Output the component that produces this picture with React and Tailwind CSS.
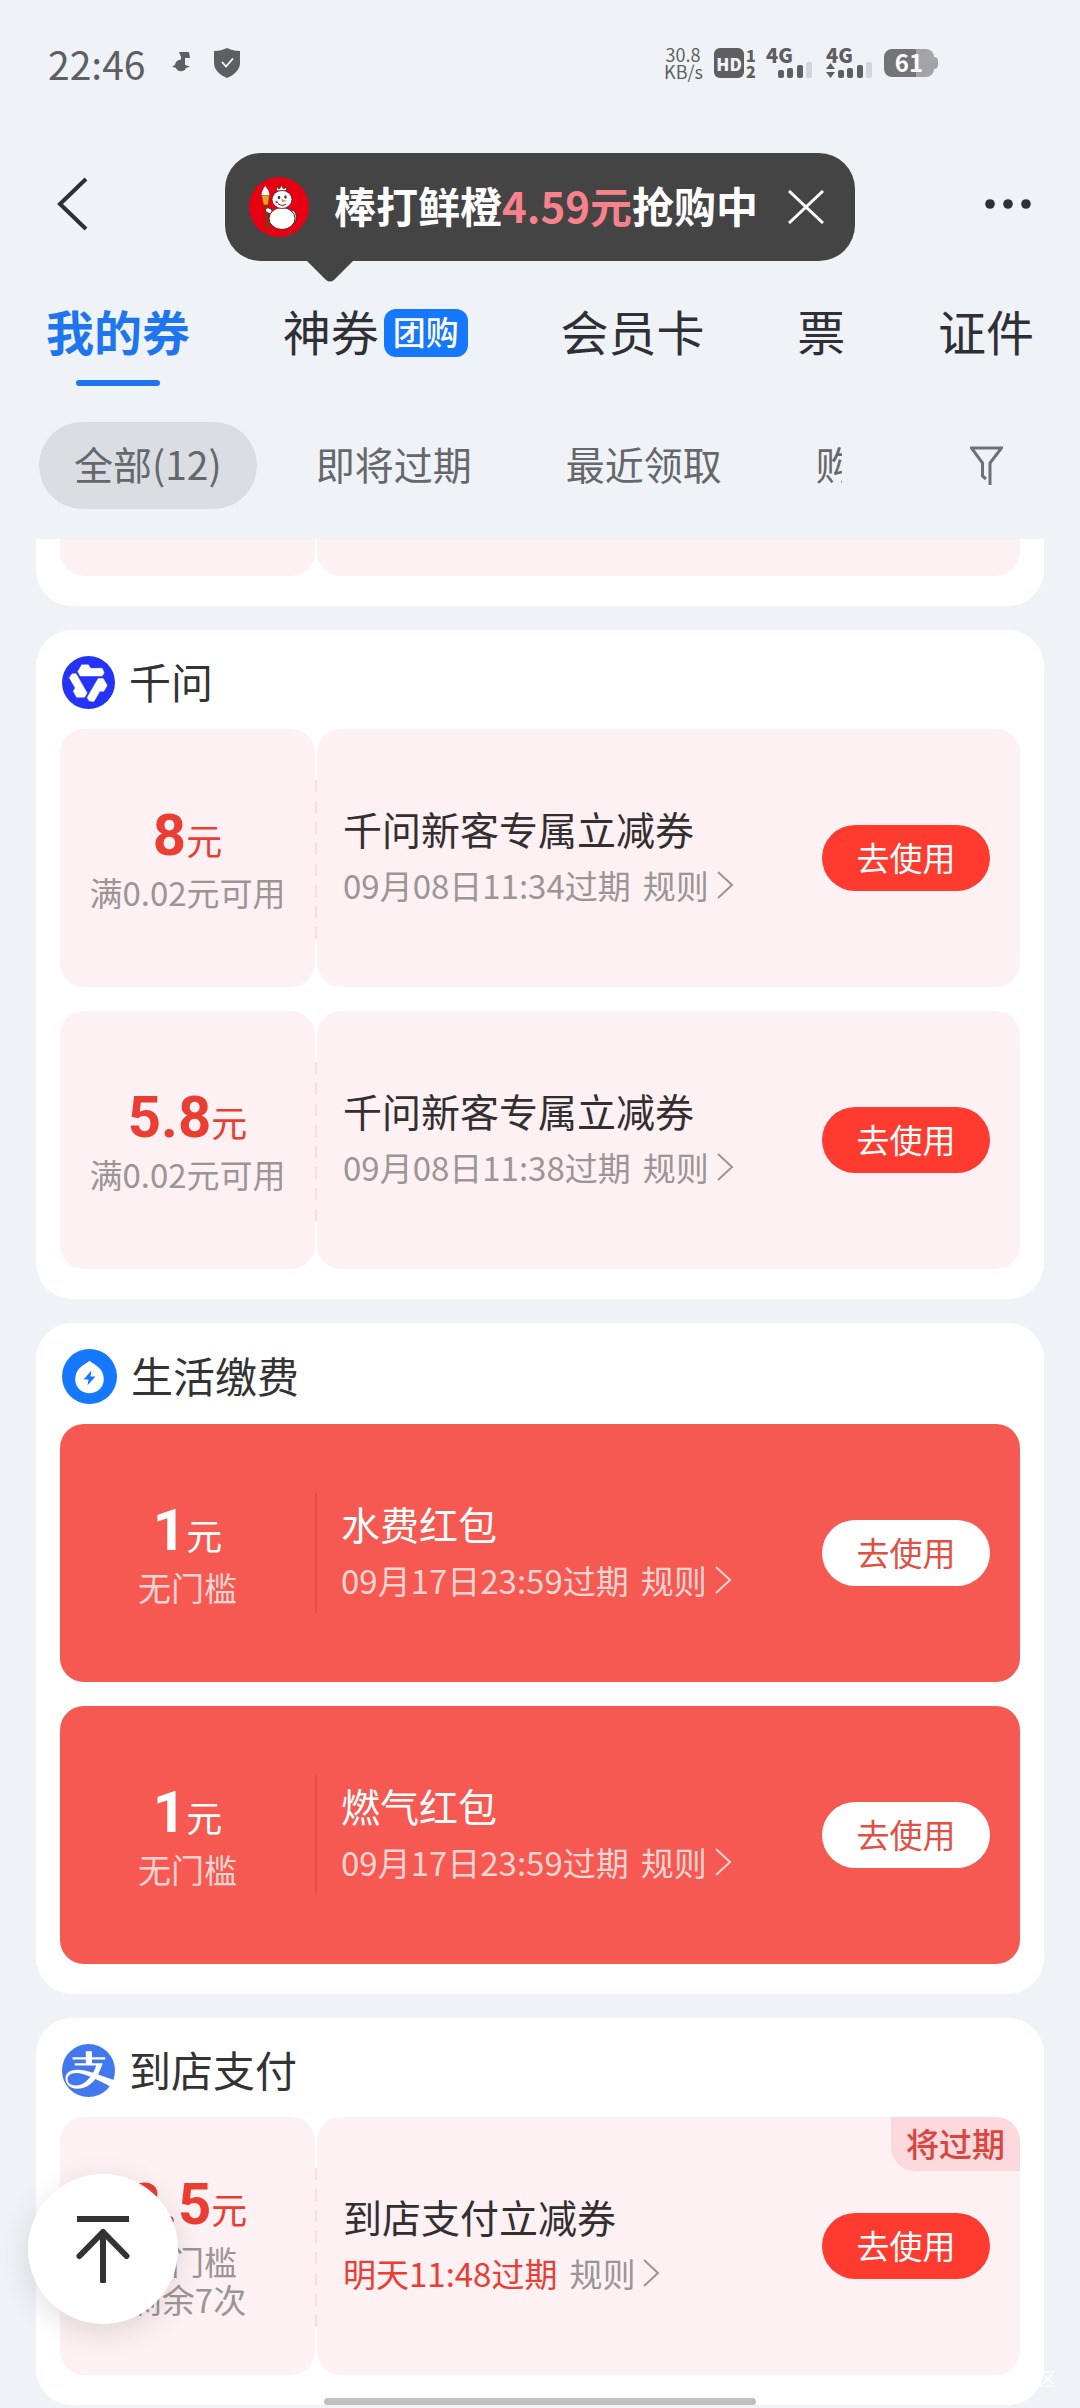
import React, { useState } from 'react';
import { clsx } from 'clsx';
import { FaAlipay } from 'react-icons/fa';

const TABS = [
  { id: 'mine', label: '我的券' },
  { id: 'deals', label: '神券', badge: '团购' },
  { id: 'member', label: '会员卡' },
  { id: 'ticket', label: '票' },
  { id: 'id', label: '证件' },
];

const FILTERS = ['全部(12)', '即将过期', '最近领取', '购物'];

const SECTIONS = [
  {
    id: 'qianwen',
    title: '千问',
    icon: <QianwenLogo />,
    coupons: [
      { amount: '8', notes: ['满0.02元可用'], name: '千问新客专属立减券', expire: '09月08日11:34过期' },
      { amount: '5.8', notes: ['满0.02元可用'], name: '千问新客专属立减券', expire: '09月08日11:38过期' },
    ],
  },
  {
    id: 'life',
    title: '生活缴费',
    icon: <LifeLogo />,
    coupons: [
      { amount: '1', notes: ['无门槛'], name: '水费红包', expire: '09月17日23:59过期', solid: true },
      { amount: '1', notes: ['无门槛'], name: '燃气红包', expire: '09月17日23:59过期', solid: true },
    ],
  },
  {
    id: 'store',
    title: '到店支付',
    icon: <PayLogo />,
    coupons: [
      { amount: '2.5', notes: ['无门槛', '剩余7次'], name: '到店支付立减券', expire: '明天11:48过期', urgent: true },
    ],
  },
];

function QianwenLogo() {
  const blade = 'M16 16L20 9H27L29 12.5H41L43 17L41 20.5H18.5Z';
  return (
    <svg viewBox="0 0 54 54" className="h-[53px] w-[53px]" aria-hidden="true">
      <circle cx="27" cy="27" r="27" fill="#2433f5" />
      <g fill="#fff" stroke="#fff" strokeWidth=".4" strokeLinejoin="round">
        <path d={blade} />
        <path d={blade} transform="rotate(120 27 27)" />
        <path d={blade} transform="rotate(240 27 27)" />
      </g>
    </svg>
  );
}

function LifeLogo() {
  return (
    <svg viewBox="0 0 56 56" className="h-[55px] w-[55px]" aria-hidden="true">
      <circle cx="28" cy="28" r="28" fill="#1677ff" />
      <path d="M28 12C31 15 37 17 40 22C46 32 41 45 28 45C15 45 10 32 16 22C19 17 25 15 28 12Z" fill="#fff" />
      <path d="M30 22L22 31H27L26 37L34 28H29Z" fill="#1677ff" />
    </svg>
  );
}

function PayLogo() {
  return (
    <span className="flex h-[53px] w-[53px] items-center justify-center overflow-hidden rounded-full bg-white">
      <FaAlipay className="h-[62px] w-[62px] shrink-0 text-[#4377ee]" aria-hidden="true" />
    </span>
  );
}

function SnowKing() {
  return (
    <svg viewBox="0 0 60 60" className="h-[60px] w-[60px] shrink-0" aria-hidden="true">
      <circle cx="30" cy="30" r="30" fill="#e60012" />
      <path d="M17 26L18.500 51" stroke="#7a3b12" strokeWidth="3" strokeLinecap="round" />
      <path d="M12.500 18H20.500L19 28H14.500Z" fill="#f0a028" stroke="#7a3b12" strokeWidth=".6" />
      <path d="M16 9C18 11 20.500 14 20.500 18H12.500C12.500 14 14.500 12 16 9Z" fill="#fff" />
      <path d="M28 14L27 9.500L30.500 12L32.500 8L34.500 12L38 9.500L37 14Z" fill="#fff" stroke="#5a1a1a" strokeWidth=".8" />
      <path d="M23 33C19 29 15 31 17 35L23 38ZM43 33C48 34 48 42 46 46L42 42Z" fill="#fff" stroke="#5a1a1a" strokeWidth="1" />
      <ellipse cx="33" cy="41.500" rx="13" ry="11" fill="#fff" stroke="#5a1a1a" strokeWidth="1" />
      <ellipse cx="33" cy="22.500" rx="10" ry="9" fill="#fff" stroke="#5a1a1a" strokeWidth=".8" />
      <ellipse cx="30" cy="20.500" rx="1.300" ry="1.800" fill="#1c3f8f" />
      <ellipse cx="36.500" cy="20" rx="1.300" ry="1.800" fill="#1c3f8f" />
      <path d="M32.500 22L38 24L33 25Z" fill="#f08a1c" />
      <path d="M28 25C30 29 35 29 37 27" fill="none" stroke="#5a1a1a" strokeWidth="1" />
      <circle cx="27.500" cy="25" r="1.200" fill="#e8304a" />
    </svg>
  );
}

function Signal({ active }) {
  return (
    <div className="flex h-[30px] w-[46px] flex-col justify-between">
      <span className="text-[20px] leading-[14px] font-black">4G</span>
      <svg viewBox="0 0 46 16" className="h-4 w-[46px]" fill="#5e5f63" aria-hidden="true">
        {active && <path d="M0 7L4.500 1L9 7ZM0 10H9L4.500 16Z" />}
        <rect x="12" y="8" width="6" height="8" rx="2" />
        <rect x="21" y="6" width="6" height="10" rx="2" />
        <rect x="31" y="3" width="6" height="13" rx="2" />
        <rect x="40" y="0" width="6" height="16" rx="2" fill="#d3d5da" />
      </svg>
    </div>
  );
}

function StatusBar() {
  return (
    <div className="flex items-center justify-between pt-12 pr-[142px] pl-12 text-[#5e5f63]">
      <div className="flex h-[30px] items-center">
        <span className="text-[39px] leading-[30px]">22:46</span>
        <svg viewBox="0 0 18 22" className="ml-[27px] h-[22px] w-[18px]" fill="#5e5f63" aria-hidden="true">
          <path d="M7 0H17L18 6H13V13L18 14.500L14 16A5.500 5.500 0 0 1 4 16L0 14.500L3 13A6 6 0 0 1 9 7.500V5Z" />
        </svg>
        <svg viewBox="0 0 26 30" className="ml-6 h-[30px] w-[26px]" aria-hidden="true">
          <path d="M13 0C17 2 21 3 26 3V15C26 22 20 27 13 30C6 27 0 22 0 15V3C5 3 9 2 13 0Z" fill="#5e5f63" />
          <path d="M8 14L12 18.500L19 10.500" fill="none" stroke="#fff" strokeWidth="1.800" />
        </svg>
      </div>
      <div className="flex h-[30px] items-center">
        <div className="w-[38px] text-center text-[18px] leading-[17px]">
          <div>30.8</div>
          <div>KB/s</div>
        </div>
        <span className="ml-3 flex h-[30px] w-[30px] items-center justify-center rounded-md bg-[#5e5f63] text-[17px] leading-none font-black text-[#eff3f8]">
          HD
        </span>
        <span className="mr-2.5 ml-0.5 w-2.5 text-[16px] leading-[16px] font-black">
          1<br />2
        </span>
        <Signal />
        <span className="w-3.5" />
        <Signal active />
        <div className="ml-3 flex items-center">
          <span className="flex h-7 w-[50px] items-center justify-center rounded-lg bg-linear-to-r from-[#737478] from-64% to-[#a2a4a8] to-64% pb-0.5 text-[24px] leading-none font-bold text-white">
            61
          </span>
          <span className="h-3 w-1 rounded-r-sm bg-[#a2a4a8]" />
        </div>
      </div>
    </div>
  );
}

function NavBar() {
  const [showTip, setShowTip] = useState(true);
  return (
    <div className="mt-[75px] flex h-[108px] items-center">
      <div className="flex flex-1 pb-1.5">
        <button type="button" aria-label="返回" className="pl-14">
          <svg viewBox="0 0 32 54" className="h-[54px] w-8" fill="none" stroke="#2f3035" strokeWidth="4" aria-hidden="true">
            <path d="M30 2L4 27L30 52" />
          </svg>
        </button>
      </div>
      {showTip && (
        <div className="relative flex h-full items-center rounded-[36px] bg-[#444] pr-[31px] pl-6">
          <SnowKing />
          <p className="ml-[25px] pb-1 text-[42px] leading-[60px] font-bold whitespace-nowrap text-white">
            棒打鲜橙<span className="text-[#f8818b]">4.59元</span>抢购中
          </p>
          <button type="button" aria-label="关闭" className="ml-[30px]" onClick={() => setShowTip(false)}>
            <svg viewBox="0 0 36 34" className="h-[34px] w-9" stroke="#fff" strokeWidth="3" aria-hidden="true">
              <path d="M1 1L35 33M35 1L1 33" />
            </svg>
          </button>
          <svg viewBox="0 0 46 21" className="absolute top-full left-[82px] h-[21px] w-[46px]" fill="#444" aria-hidden="true">
            <path d="M0 0H46L27 19Q23 22 19 19Z" />
          </svg>
        </div>
      )}
      <div className="flex flex-1 justify-end pb-1.5">
        <button type="button" aria-label="更多" className="pr-12">
          <svg viewBox="0 0 48 30" className="h-[30px] w-12" fill="#2f3035" aria-hidden="true">
            <circle cx="6" cy="15" r="4.800" />
            <circle cx="24" cy="15" r="4.800" />
            <circle cx="42" cy="15" r="4.800" />
          </svg>
        </button>
      </div>
    </div>
  );
}

function Tabs() {
  const [current, setCurrent] = useState('mine');
  return (
    <nav className="mt-9 flex h-[89px] items-start justify-between px-[46px]">
      {TABS.map((tab) => (
        <button
          key={tab.id}
          type="button"
          onClick={() => setCurrent(tab.id)}
          className={clsx('flex flex-col items-center', current === tab.id ? 'font-bold text-[#1f75f0]' : 'text-[#2f3035]')}
        >
          <span className="flex h-[72px] items-center gap-[5px]">
            <span className="pb-1.5 text-[48px] leading-[60px]">{tab.label}</span>
            {tab.badge && (
              <span className="flex h-12 w-[84px] items-center justify-center rounded-xl bg-[#1677ff] pb-1 text-[33px] leading-none font-medium text-white">
                {tab.badge}
              </span>
            )}
          </span>
          {current === tab.id && <span className="mt-[11px] h-1.5 w-[84px] rounded-full bg-[#1f75f0]" />}
        </button>
      ))}
    </nav>
  );
}

function Filters() {
  const [current, setCurrent] = useState(FILTERS[0]);
  return (
    <div className="mt-9 flex items-center pb-[30px] pl-[39px]">
      <div className="flex min-w-0 flex-1 gap-6 overflow-hidden">
        {FILTERS.map((label) => (
          <button
            key={label}
            type="button"
            onClick={() => setCurrent(label)}
            className={clsx(
              'h-[87px] shrink-0 rounded-full px-[35px] pb-1.5 text-[39px] leading-[60px] whitespace-nowrap text-[#66676b]',
              current === label && 'bg-[#dadde2]'
            )}
          >
            {label}
          </button>
        ))}
      </div>
      <button type="button" aria-label="筛选" className="shrink-0 pr-[77px] pl-32">
        <svg viewBox="0 0 33 40" className="h-10 w-[33px]" fill="none" stroke="#707176" strokeWidth="3" aria-hidden="true">
          <path d="M16 33L12.500 30V17L1.500 2H31.500L20 17V39" />
        </svg>
      </button>
    </div>
  );
}

function Coupon({ amount, notes, name, expire, solid, urgent }) {
  const tile = solid ? '' : 'rounded-3xl bg-[#fef1f3]';
  return (
    <li className={clsx('relative flex h-[258px]', solid ? 'rounded-3xl bg-[#f65951]' : 'gap-0.5')}>
      <div className={clsx('flex w-[255px] shrink-0 flex-col items-center justify-center pb-2', tile)}>
        <p className={clsx('flex h-[76px] items-baseline', solid ? 'text-white' : 'text-[#ea3d33]')}>
          <span className="font-['Roboto','Noto_Sans_CJK_SC',sans-serif] text-[58px] leading-[76px] font-bold">{amount}</span>
          <span className="text-[36px] leading-[38px]">元</span>
        </p>
        {notes.map((note) => (
          <p key={note} className={clsx('text-[33px] leading-[38px]', solid ? 'text-white/75' : 'text-[#9b9596]')}>
            {note}
          </p>
        ))}
      </div>
      <div className={clsx('flex min-w-0 flex-1 items-center justify-between pr-[30px] pl-[26px]', tile)}>
        <div className="pb-1.5">
          <h3 className={clsx('text-[39px] leading-[60px]', solid ? 'text-white' : 'text-[#332f30]')}>{name}</h3>
          <div className={clsx('flex items-center text-[33px] leading-[54px]', solid ? 'text-white/75' : 'text-[#9b9596]')}>
            <span className={clsx(urgent && 'text-[#ea3d33]')}>{expire}</span>
            <a href="#rules" className="ml-3 flex items-center gap-2">
              规则
              <svg viewBox="0 0 17 28" className="h-7 w-[17px]" fill="none" stroke="currentColor" strokeWidth="2" aria-hidden="true">
                <path d="M1 1L15 14L1 27" />
              </svg>
            </a>
          </div>
        </div>
        <button
          type="button"
          className={clsx(
            'h-[66px] w-[168px] shrink-0 rounded-full pb-[3px] text-[33px] leading-[60px]',
            solid ? 'bg-white text-[#e24f44]' : 'bg-[#ff3b2f] text-white'
          )}
        >
          去使用
        </button>
      </div>
      {/* perforation between the two halves */}
      {solid ? (
        <span className="absolute top-[69px] left-[255px] h-[120px] w-0.5 bg-[#e64b45]" />
      ) : (
        <span className="absolute top-[51px] left-[255px] h-[159px] w-0.5 bg-[repeating-linear-gradient(to_bottom,#f6dde0_0_12px,#fef1f3_12px_21px)]" />
      )}
      {urgent && (
        <span className="absolute top-0 right-0 flex h-[54px] items-center rounded-tr-3xl rounded-bl-3xl bg-[#fcd9dc] px-[15px] pb-0.5 text-[33px] leading-none font-medium text-[#dc453d]">
          将过期
        </span>
      )}
    </li>
  );
}

export default function App() {
  return (
    <div
      lang="zh-CN"
      className="relative min-h-screen overflow-hidden bg-[#eff3f8] pb-[3px] font-['Noto_Sans_CJK_SC',sans-serif]"
    >
      <header>
        <StatusBar />
        <NavBar />
        <Tabs />
        <Filters />
      </header>

      <main className="flex flex-col gap-6 px-9">
        {/* tail of the section that has scrolled under the header */}
        <div className="flex gap-0.5 rounded-b-[36px] bg-white px-6 pb-[30px]">
          <div className="h-[37px] w-[255px] rounded-b-3xl bg-[#fef1f3]" />
          <div className="h-[37px] flex-1 rounded-b-3xl bg-[#fef1f3]" />
        </div>

        {SECTIONS.map((section) => (
          <section key={section.id} className="rounded-[36px] bg-white px-6 pt-[26px] pb-[30px]">
            <div className="flex items-center gap-3.5 pb-5 pl-0.5">
              {section.icon}
              <h2 className="pb-1 text-[42px] leading-[48px] text-[#333]">{section.title}</h2>
            </div>
            <ul className="flex flex-col gap-6">
              {section.coupons.map((coupon) => (
                <Coupon key={coupon.name + coupon.expire} {...coupon} />
              ))}
            </ul>
          </section>
        ))}
      </main>

      <button
        type="button"
        aria-label="回到顶部"
        onClick={() => window.scrollTo({ top: 0, behavior: 'smooth' })}
        className="fixed bottom-[84px] left-7 flex h-[150px] w-[150px] items-center justify-center rounded-full bg-white shadow-[0_8px_30px_rgba(0,0,0,0.12)]"
      >
        <svg viewBox="0 0 54 68" className="h-[68px] w-[54px]" fill="none" stroke="#333" strokeWidth="6" aria-hidden="true">
          <path d="M1 4H53" />
          <path d="M27 66V17M3.500 41L27 17L50.500 41" strokeLinecap="round" strokeLinejoin="round" />
        </svg>
      </button>
      <span className="absolute right-6 bottom-[18px] text-[18px] leading-[24px] text-white/80">区</span>
      <div className="fixed inset-x-0 bottom-[3px] flex justify-center">
        <span className="h-[7px] w-2/5 rounded-full bg-[#c0c0c0]" />
      </div>
    </div>
  );
}
